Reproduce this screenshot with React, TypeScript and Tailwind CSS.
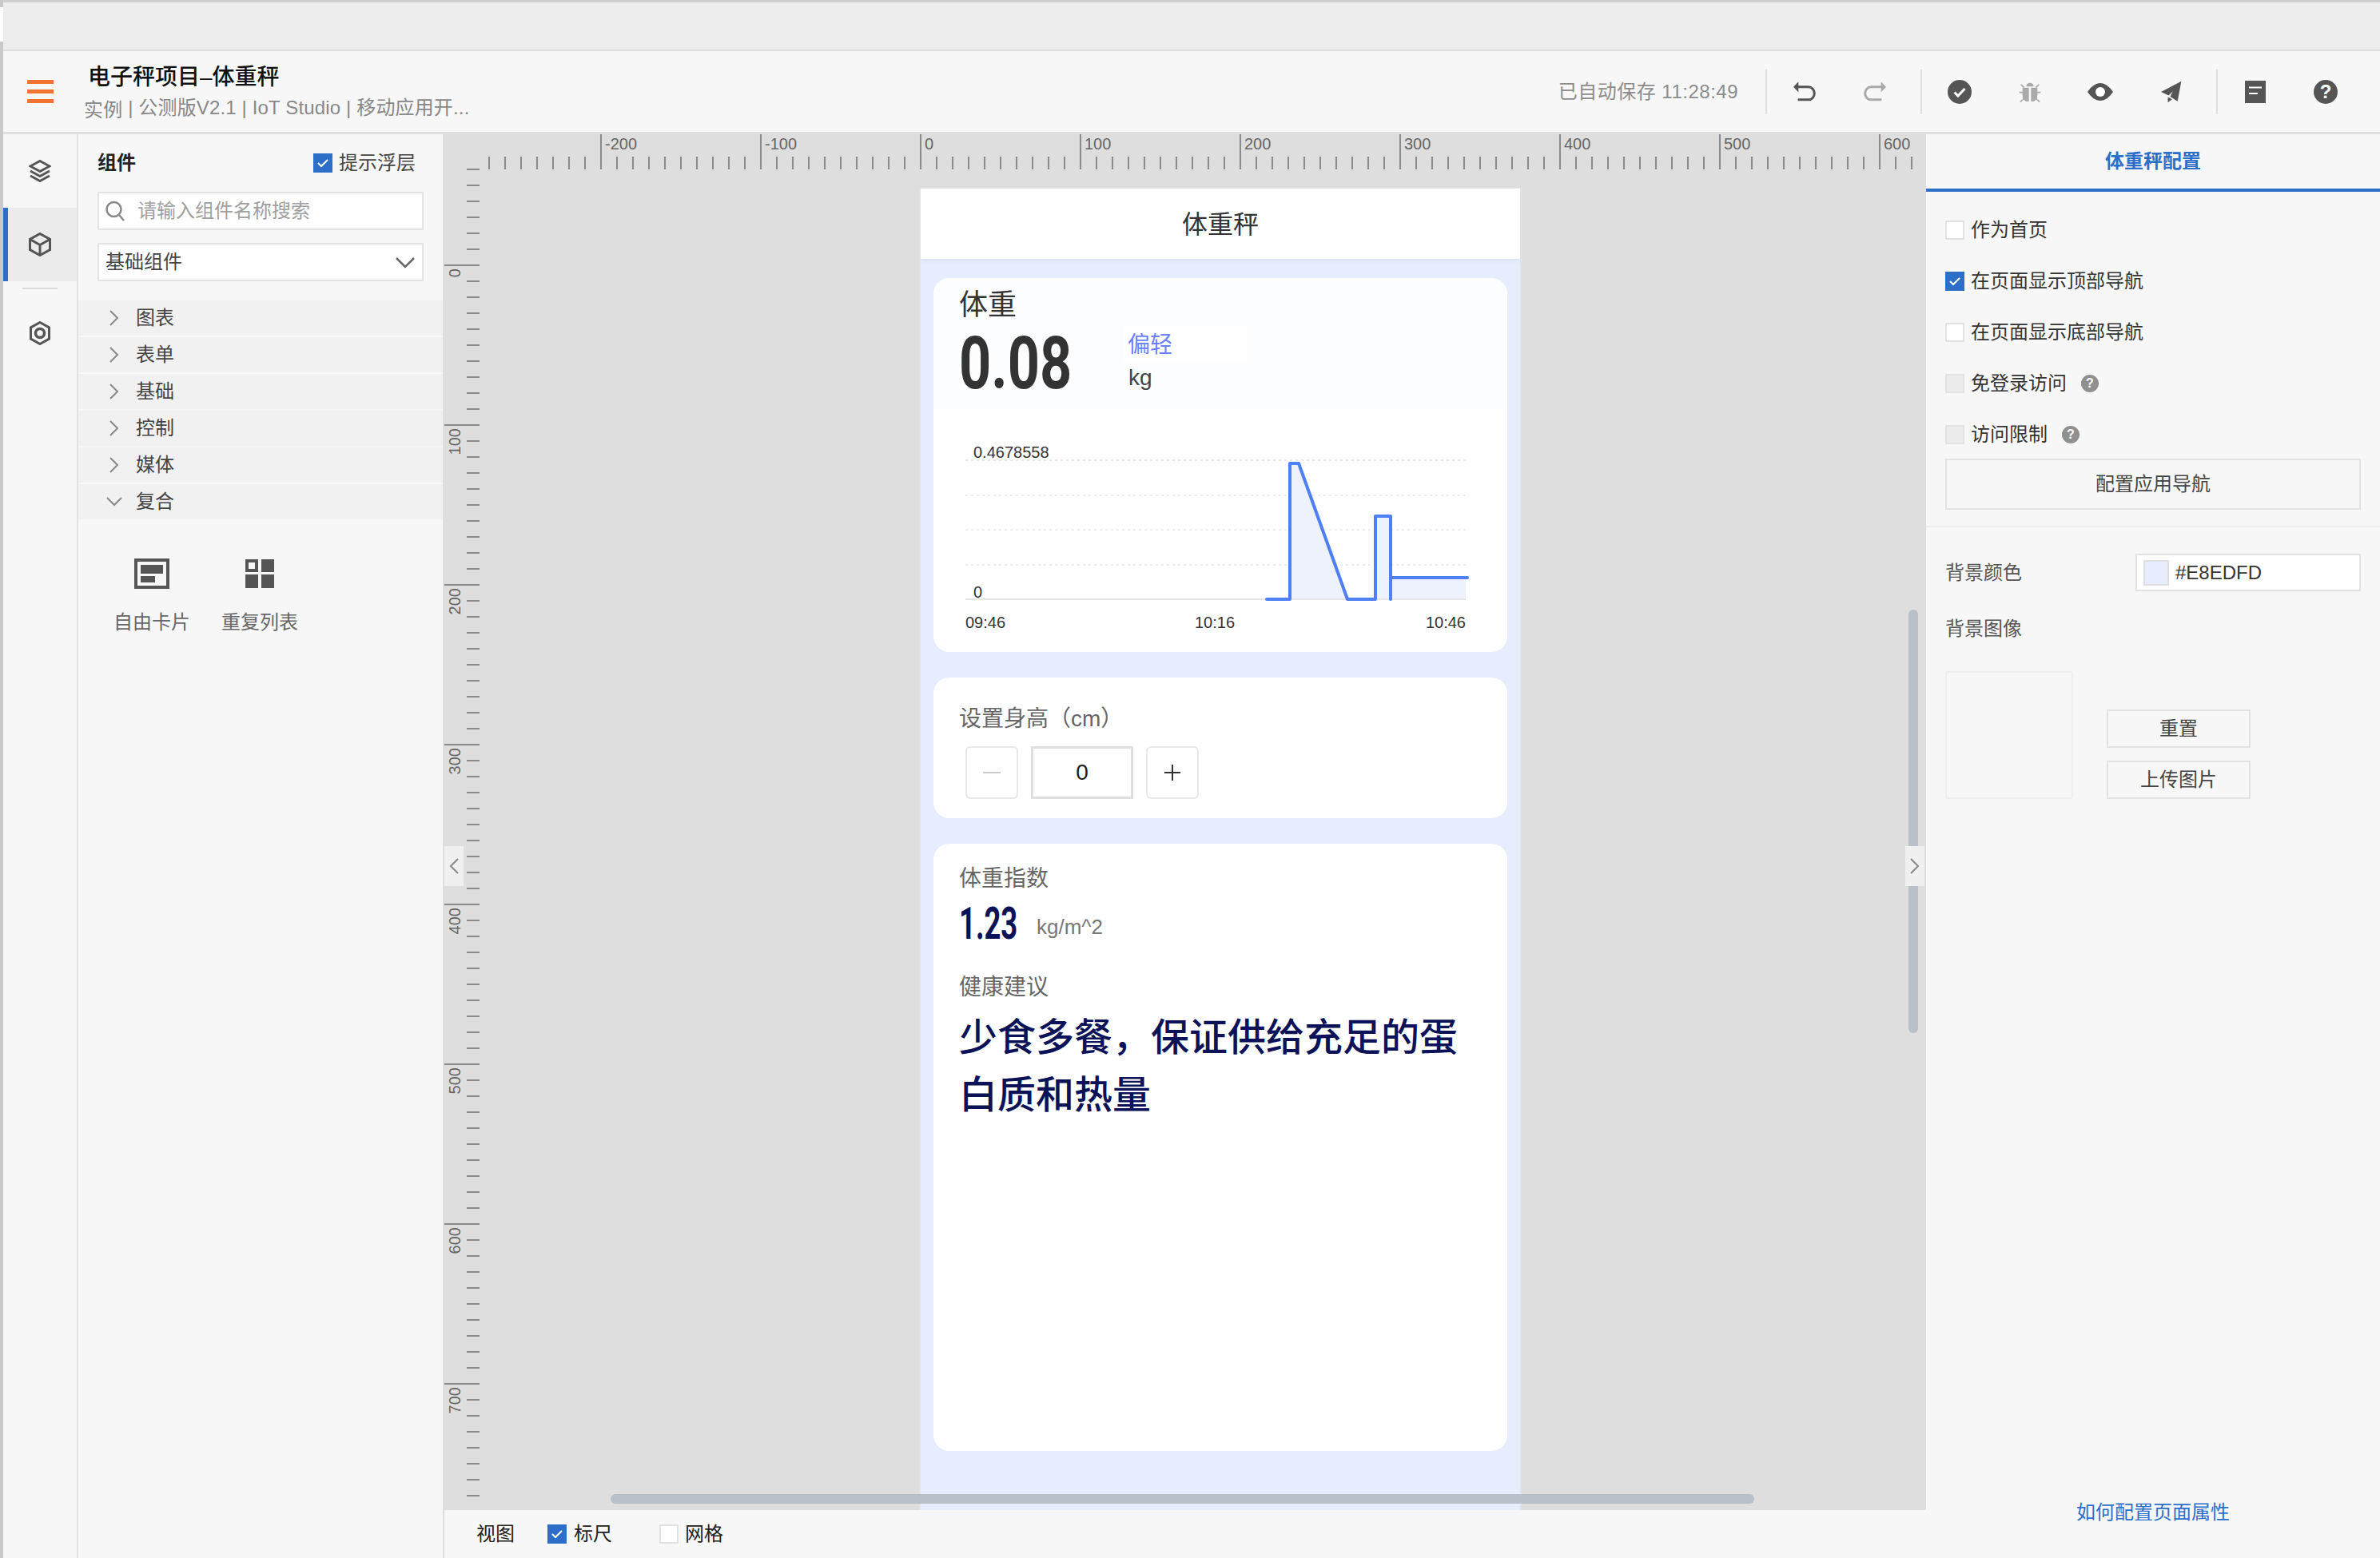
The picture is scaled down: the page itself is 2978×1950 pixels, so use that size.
const BLUE = "#2d6ec9";
const RULER = "#8a8a8a";

const CATEGORIES = ["图表", "表单", "基础", "控制", "媒体", "复合"];

function CheckBox({ checked = false, disabled = false }: { checked?: boolean; disabled?: boolean }) {
  if (checked) {
    return (
      <span className="flex h-6 w-6 shrink-0 items-center justify-center" style={{ backgroundColor: BLUE }}>
        <svg width="16" height="12" viewBox="0 0 16 12" fill="none" stroke="#fff" strokeWidth="2">
          <path d="M2 6l4 4 8-8" />
        </svg>
      </span>
    );
  }
  return <span className={`h-6 w-6 shrink-0 border-2 border-[#e2e2e2] ${disabled ? "bg-[#ececec]" : "bg-white"}`} />;
}

function Chevron({ dir = "right" }: { dir?: "right" | "down" | "left" }) {
  const turn = dir === "down" ? "rotate-90" : dir === "left" ? "rotate-180" : "";
  return (
    <svg width="14" height="22" viewBox="0 0 14 22" fill="none" stroke="#888" strokeWidth="2" className={turn}>
      <path d="M2 2l9 9-9 9" />
    </svg>
  );
}

function Sep() {
  return <span className="h-14 w-0.5 bg-[#dfdfdf]" />;
}

function IconCell({ children }: { children: React.ReactNode }) {
  return <span className="flex h-10 w-[88px] items-center justify-center">{children}</span>;
}

function Undo({ color, flip = false }: { color: string; flip?: boolean }) {
  return (
    <svg width="30" height="27" viewBox="0 0 90 80" className={flip ? "-scale-x-100" : ""}>
      <path d="M3 23 22 3v40z" fill={color} />
      <path d="M20 23h40a22 24 0 0 1 0 48H20" fill="none" stroke={color} strokeWidth="9" />
    </svg>
  );
}

function Header() {
  return (
    <header className="flex h-[104px] shrink-0 items-center border-b-[3px] border-[#e0e0e0] bg-[#f7f7f7]">
      <span className="ml-[30px] flex w-[33px] flex-col gap-[7px]">
        <span className="h-[5px] bg-[#f37430]" />
        <span className="h-[5px] bg-[#f37430]" />
        <span className="h-[5px] bg-[#f37430]" />
      </span>
      <div className="ml-[38px] flex flex-col">
        <div className="ml-[5px] translate-y-0.5 text-[28px] leading-10 font-medium text-[#111]">电子秤项目–体重秤</div>
        <div className="text-[24px] leading-10 tracking-[0.15px] text-[#888]">
          <span className="inline-block translate-y-[3px]">实例</span> | 公测版V2.1 | IoT Studio | 移动应用开...
        </div>
      </div>
      <div className="ml-auto flex items-center pr-6">
        <span className="mr-[34px] text-[24px] tracking-[0.5px] text-[#8c8c8c]">已自动保存 11:28:49</span>
        <Sep />
        <span className="mr-[13px] ml-[3px] flex">
          <IconCell><Undo color="#555" /></IconCell>
          <IconCell><Undo color="#aaa" flip /></IconCell>
        </span>
        <Sep />
        <span className="mr-[13px] ml-[3px] flex">
          <IconCell>
            <svg width="30" height="30" viewBox="0 0 30 30">
              <circle cx="15" cy="15" r="15" fill="#555" />
              <path d="M8.500 15.500l4.500 4.500 8.500-9" fill="none" stroke="#fff" strokeWidth="3" />
            </svg>
          </IconCell>
          <IconCell>
            <svg width="28" height="28" viewBox="0 0 84 84" fill="#aaa">
              <path d="M28 22a14 14 0 0 1 28 0z" />
              <path d="M14 26h24v52h-8c-10-2-16-12-16-24zM46 26h24v28c0 12-6 22-16 24h-8z" />
              <path d="M2 44h14M68 44h14M8 14l12 12M76 14 64 26M6 80l14-14M78 80 64 66" stroke="#aaa" strokeWidth="5" fill="none" />
            </svg>
          </IconCell>
          <IconCell>
            <svg width="32" height="22" viewBox="0 0 32 22">
              <path d="M0 11C5 4 10 0 16 0s11 4 16 11c-5 7-10 11-16 11S5 18 0 11z" fill="#555" />
              <circle cx="16" cy="11" r="6" fill="#fff" />
            </svg>
          </IconCell>
          <IconCell>
            <svg width="27" height="28" viewBox="0 0 82 84" fill="#555">
              <path d="M80 2 3 42l29 14 16-16-10 20 28 18z" />
              <path d="M29 62v20l16-12z" />
            </svg>
          </IconCell>
        </span>
        <Sep />
        <span className="ml-[3px] flex">
          <IconCell>
            <svg width="26" height="28" viewBox="0 0 26 28">
              <path d="M0 0h26v28H0z" fill="#555" />
              <path d="M5 8.500h16M5 16h11" stroke="#fff" strokeWidth="2" />
            </svg>
          </IconCell>
          <IconCell>
            <span className="flex h-[30px] w-[30px] items-center justify-center rounded-full bg-[#555] text-[24px] font-bold text-white">?</span>
          </IconCell>
        </span>
      </div>
    </header>
  );
}

function LeftRail() {
  return (
    <nav className="flex w-[94px] shrink-0 flex-col border-r-2 border-[#e2e2e2] bg-[#f7f7f7]">
      <div className="flex h-[92px] items-center justify-center">
        <svg width="28" height="28" viewBox="0 0 28 28" fill="none" stroke="#555" strokeWidth="3">
          <path d="M14 1.500 26 8 14 14.500 2 8zM2 14l12 6.500L26 14M2 20l12 6.500L26 20" />
        </svg>
      </div>
      <div className="flex h-[92px] items-center justify-center border-l-[6px] border-[#2d6ec9] bg-[#ebebeb] pr-[6px]">
        <svg width="28" height="30" viewBox="0 0 28 30" fill="none" stroke="#555" strokeWidth="3">
          <path d="M14 1.500 26.500 8.500v13L14 28.500 1.500 21.500v-13zM1.500 8.500l12.500 7 12.500-7M14 15.500v13" />
        </svg>
      </div>
      <div className="mx-6 mt-2 h-0.5 bg-[#dcdcdc]" />
      <div className="flex h-[110px] items-center justify-center">
        <svg width="26" height="30" viewBox="0 0 26 30" fill="none" stroke="#555">
          <path d="M13 1.500 24.500 8v14L13 28.500 1.500 22V8z" strokeWidth="3" />
          <circle cx="13" cy="15" r="5.500" strokeWidth="3.500" />
        </svg>
      </div>
    </nav>
  );
}

function ComponentPanel() {
  return (
    <aside className="flex w-[456px] shrink-0 flex-col bg-[#f7f7f7]">
      <div className="flex h-[72px] items-center justify-between pr-[34px] pl-6">
        <span className="text-[24px] font-bold text-[#222]">组件</span>
        <span className="flex items-center gap-2 text-[24px] text-[#444]">
          <CheckBox checked />
          提示浮层
        </span>
      </div>
      <div className="mx-6 flex h-12 items-center gap-4 border-2 border-[#e2e2e2] bg-white pl-2">
        <svg width="24" height="26" viewBox="0 0 24 26" fill="none" stroke="#888" strokeWidth="2.500">
          <circle cx="10.500" cy="11" r="9" />
          <path d="M17 18l6 7" />
        </svg>
        <span className="text-[24px] text-[#a0a0a0]">请输入组件名称搜索</span>
      </div>
      <div className="mx-6 mt-4 flex h-12 items-center justify-between border-2 border-[#e2e2e2] bg-white pr-2 pl-2">
        <span className="text-[24px] text-[#444]">基础组件</span>
        <svg width="26" height="15" viewBox="0 0 26 15" fill="none" stroke="#666" strokeWidth="2.500">
          <path d="M2 2l11 11L24 2" />
        </svg>
      </div>
      <div className="mt-6 flex flex-col gap-0.5">
        {CATEGORIES.map((name, i) => (
          <div key={name} className="flex h-11 items-center bg-[#f1f1f1] pl-[38px] text-[24px] text-[#444]">
            <span className="flex w-[34px] justify-start">
              <Chevron dir={i === CATEGORIES.length - 1 ? "down" : "right"} />
            </span>
            {name}
          </div>
        ))}
      </div>
      <div className="mt-[49px] flex">
        <div className="ml-11 flex w-24 flex-col items-center gap-[26px]">
          <svg width="44" height="38" viewBox="0 0 44 38">
            <path d="M2 2h40v34H2z" fill="none" stroke="#555" strokeWidth="4" />
            <path d="M8 8h28v11H8zM8 22h18v8H8z" fill="#555" />
          </svg>
          <span className="text-[24px] leading-8 text-[#666]">自由卡片</span>
        </div>
        <div className="ml-[39px] flex w-24 flex-col items-center gap-[26px]">
          <svg width="36" height="38" viewBox="0 0 36 38" fill="#555">
            <path fillRule="evenodd" d="M0 1h16v16H0zM4 5v8h8V5z" />
            <path d="M20 1h16v16H20zM0 20h16v17H0zM20 20h16v17H20z" />
          </svg>
          <span className="text-[24px] leading-8 text-[#666]">重复列表</span>
        </div>
      </div>
    </aside>
  );
}

function Rulers() {
  const xs = Array.from({ length: 90 }, (_, i) => 58 + i * 20);
  const ys = Array.from({ length: 84 }, (_, i) => 44 + i * 20);
  return (
    <svg width="1856" height="1722" viewBox="0 0 1856 1722" className="absolute top-0 left-0">
      {xs.map((x) => {
        const major = (x - 598) % 200 === 0;
        const value = (x - 598) / 2;
        return (
          <g key={x}>
            <line x1={x} x2={x} y1={major ? 0 : 28} y2={44} stroke={RULER} strokeWidth="2" />
            {major && (
              <text x={x + 5} y={19} fontSize="20" fill="#666">
                {value}
              </text>
            )}
          </g>
        );
      })}
      {ys.map((y) => {
        const major = (y - 164) % 200 === 0;
        const value = (y - 164) / 2;
        return (
          <g key={y}>
            <line x1={major ? 2 : 30} x2={46} y1={y} y2={y} stroke={RULER} strokeWidth="2" />
            {major && y >= 164 && (
              <text transform={`translate(22 ${y + 4}) rotate(-90)`} textAnchor="end" fontSize="20" fill="#666">
                {value}
              </text>
            )}
          </g>
        );
      })}
    </svg>
  );
}

function WeightChart() {
  return (
    <svg width="718" height="302" viewBox="0 0 718 302">
      {[62, 106, 149, 193].map((y) => (
        <line key={y} x1="40" x2="666" y1={y} y2={y} stroke="#ececec" strokeWidth="2" strokeDasharray="3 4" />
      ))}
      <path d="M446 236V66h11l61 170h35V132h19v104M572 209h94v27h-94z" fill="#eef2fd" />
      <line x1="40" x2="666" y1="236" y2="236" stroke="#e6e6e6" strokeWidth="2" />
      <path d="M417 236h29V66h11l61 170h35V132h19v104V209h96" fill="none" stroke="#4f7ff5" strokeWidth="4" strokeLinejoin="round" strokeLinecap="round" />
      <g fontSize="20" fill="#333">
        <text x="50" y="59">0.4678558</text>
        <text x="50" y="234">0</text>
        <text x="40" y="272">09:46</text>
        <text x="327" y="272">10:16</text>
        <text x="666" y="272" textAnchor="end">10:46</text>
      </g>
    </svg>
  );
}

function Phone() {
  return (
    <div className="flex h-full w-[754px] flex-col overflow-hidden border-x-2 border-t border-[#e3e3e3] bg-[#e8edfd]">
      <div className="flex h-[88px] shrink-0 items-center justify-center bg-white pt-0.5 text-[32px] text-[#333] shadow-[0_2px_6px_rgba(0,0,0,0.06)]">体重秤</div>
      <div className="mx-4 mt-6 shrink-0 overflow-hidden rounded-[20px] bg-white">
        <div className="h-[166px] bg-[#fcfdff] pt-2.5 pl-[32px]">
          <div className="text-[36px] leading-12 text-[#333]">体重</div>
          <div className="mt-0.5 flex">
            <div className="h-24 w-[206px] origin-left scale-x-[.78] font-['Roboto',sans-serif] text-[90px] leading-24 font-bold text-[#333]">0.08</div>
            <div className="flex flex-col">
              <div className="h-[45px] w-[154px] rounded bg-white pl-[5px] text-[28px] leading-[48px] text-[#6b7fff]">偏轻</div>
              <div className="pl-1.5 text-[28px] leading-10 text-[#444]">kg</div>
            </div>
          </div>
        </div>
        <WeightChart />
      </div>
      <div className="mx-4 mt-8 h-[176px] shrink-0 rounded-[20px] bg-white pt-8">
        <div className="pl-[32px] text-[28px] leading-10 text-[#666]">设置身高（cm）</div>
        <div className="mt-3.5 ml-10 flex gap-4">
          <span className="flex h-[66px] w-[66px] items-center justify-center rounded-md border-2 border-[#e8e8e8]">
            <span className="h-0.5 w-[22px] bg-[#ccc]" />
          </span>
          <span className="flex h-[66px] w-32 items-center justify-center border-[3px] border-[#dfdfdf] text-[28px] text-[#222]">0</span>
          <span className="flex h-[66px] w-[66px] items-center justify-center rounded-md border-2 border-[#e8e8e8]">
            <svg width="22" height="22" viewBox="0 0 22 22" stroke="#333" strokeWidth="2">
              <path d="M11 1v20M1 11h20" />
            </svg>
          </span>
        </div>
      </div>
      <div className="mx-4 mt-8 h-[760px] shrink-0 rounded-[20px] bg-white pt-6 pl-[32px]">
        <div className="text-[28px] leading-10 text-[#666]">体重指数</div>
        <div className="mt-1.5 flex h-[60px] items-baseline">
          <span className="w-[97px] origin-left scale-x-[.65] font-['Roboto',sans-serif] text-[56px] leading-[60px] font-bold text-[#0c1257]">1.23</span>
          <span className="-translate-y-[6px] text-[26px] text-[#777]">kg/m^2</span>
        </div>
        <div className="mt-[30px] text-[28px] leading-10 text-[#666]">健康建议</div>
        <div className="mt-[7px] w-[650px] text-[48px] leading-[72px] font-medium text-[#0c1257]">少食多餐，保证供给充足的蛋白质和热量</div>
      </div>
    </div>
  );
}

function Canvas() {
  return (
    <div className="relative min-h-0 flex-1 overflow-hidden bg-[#dedede] pt-[67px] pl-[596px]">
      <Rulers />
      <div className="relative h-full">
        <Phone />
      </div>
      <div className="absolute top-[595px] right-[10px] h-[530px] w-3 rounded-full bg-[#b9c0c9]" />
      <div className="absolute bottom-2 left-[210px] h-3 w-[1431px] rounded-full bg-[#b9c0c9]" />
      <div className="absolute top-[891px] left-0.5 flex h-[50px] w-6 items-center justify-center bg-[#f0f0f0]">
        <Chevron dir="left" />
      </div>
      <div className="absolute top-[891px] right-0.5 flex h-[50px] w-6 items-center justify-center bg-[#f0f0f0]">
        <Chevron />
      </div>
    </div>
  );
}

function ViewBar() {
  return (
    <div className="flex h-[60px] shrink-0 items-center border-l-2 border-[#dedede] bg-[#f7f7f7] pl-10 text-[24px] text-[#222]">
      <span>视图</span>
      <span className="ml-[41px] flex items-center gap-[9px]">
        <CheckBox checked />
        标尺
      </span>
      <span className="ml-[59px] flex items-center gap-2">
        <CheckBox />
        网格
      </span>
    </div>
  );
}

function HelpDot() {
  return <span className="flex h-[22px] w-[22px] items-center justify-center rounded-full bg-[#909090] text-[16px] font-bold text-white">?</span>;
}

function RightPanel() {
  const rows = [
    { label: "作为首页" },
    { label: "在页面显示顶部导航", checked: true },
    { label: "在页面显示底部导航" },
    { label: "免登录访问", disabled: true, help: true },
    { label: "访问限制", disabled: true, help: true },
  ];
  return (
    <aside className="flex w-[568px] shrink-0 flex-col bg-[#f7f7f7]">
      <div className="flex h-[72px] items-center justify-center border-b-4 border-[#2d6ec9] text-[24px] font-bold text-[#2d6ec9]">体重秤配置</div>
      <div className="mt-9 flex flex-col gap-10 px-6">
        {rows.map((row) => (
          <label key={row.label} className="flex h-6 items-center text-[24px] text-[#333]">
            <CheckBox checked={row.checked} disabled={row.disabled} />
            <span className="ml-2">{row.label}</span>
            {row.help && <span className="ml-[18px]"><HelpDot /></span>}
          </label>
        ))}
      </div>
      <div className="mx-6 mt-[18px] flex h-16 items-center justify-center border-2 border-[#e2e2e2] text-[24px] text-[#444]">配置应用导航</div>
      <div className="mt-5 h-0.5 bg-[#eeeeee]" />
      <div className="mt-[33px] flex h-[47px] items-center justify-between px-6">
        <span className="text-[24px] text-[#555]">背景颜色</span>
        <span className="flex h-[47px] w-[282px] items-center border-2 border-[#e2e2e2] bg-white pl-2">
          <span className="h-8 w-8 border-2 border-[#dfdfdf] bg-[#e8edfd]" />
          <span className="ml-2 text-[24px] text-[#333]">#E8EDFD</span>
        </span>
      </div>
      <div className="mt-[31px] px-6 text-[24px] leading-8 text-[#555]">背景图像</div>
      <div className="mt-[37px] flex items-end px-6">
        <div className="h-40 w-40 rounded border-2 border-[#eeeeee]" />
        <div className="ml-[42px] flex flex-col gap-4">
          <div className="flex h-12 w-[180px] items-center justify-center border-2 border-[#e2e2e2] text-[24px] text-[#444]">重置</div>
          <div className="flex h-12 w-[180px] items-center justify-center border-2 border-[#e2e2e2] text-[24px] text-[#444]">上传图片</div>
        </div>
      </div>
      <div className="mt-auto pb-[41px] text-center text-[24px] leading-8 text-[#2d6ec9]">如何配置页面属性</div>
    </aside>
  );
}

export default function App() {
  return (
    <div className="flex h-[1950px] w-[2978px] overflow-hidden bg-[#c9c9c9] font-['Liberation_Sans','Noto_Sans_CJK_SC',sans-serif]">
      <div className="w-1 shrink-0 pt-[9px]">
        <div className="h-[43px] bg-white" />
      </div>
      <div className="flex min-w-0 flex-1 flex-col">
        <div className="h-16 shrink-0 border-t-[3px] border-b-2 border-t-[#cfcfcf] border-b-[#dedede] bg-[#ededed]" />
        <Header />
        <div className="flex min-h-0 flex-1">
          <LeftRail />
          <ComponentPanel />
          <main className="flex w-[1856px] shrink-0 flex-col">
            <Canvas />
            <ViewBar />
          </main>
          <RightPanel />
        </div>
      </div>
    </div>
  );
}
